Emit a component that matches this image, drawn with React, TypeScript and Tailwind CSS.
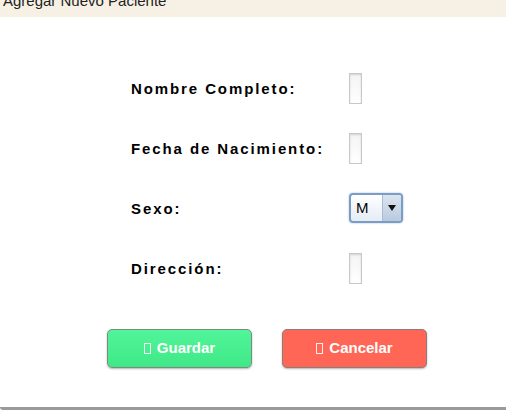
import React from 'react';

const Tofu: React.FC = () => (
  <span className="inline-block w-[7px] h-[11px] border border-white/90 mr-[6px] align-[-1px]" />
);

const TallInput: React.FC = () => (
  <div className="w-[13px] h-[31px] border border-[#c8c8c8] bg-gradient-to-b from-[#f4f4f4] to-white shadow-[inset_0_1px_2px_rgba(0,0,0,0.15)]" />
);

const SexSelect: React.FC = () => (
  <div className="flex w-[54px] h-[30px] rounded-[4px] border-2 border-[#7b9cc4] bg-gradient-to-b from-white to-[#e4ecf5] overflow-hidden shadow-[0_0_2px_rgba(90,130,180,0.6)]">
    <div className="flex-1 flex items-center pl-[5px] text-[15px] text-black">M</div>
    <div className="w-[19px] flex items-center justify-center border-l border-[#a8bcd4] bg-gradient-to-b from-[#dbe5f0] to-[#b9cadf]">
      <svg width="8" height="6" viewBox="0 0 8 6">
        <path d="M0 0 H8 L4 6 Z" fill="#111" />
      </svg>
    </div>
  </div>
);

const App: React.FC = () => {
  const rows: { label: string; field: React.ReactNode }[] = [
    { label: 'Nombre Completo:', field: <TallInput /> },
    { label: 'Fecha de Nacimiento:', field: <TallInput /> },
    { label: 'Sexo:', field: <SexSelect /> },
    { label: 'Dirección:', field: <TallInput /> },
  ];

  return (
    <div className="w-[506px] h-[410px] bg-white overflow-hidden flex flex-col font-['Liberation_Sans',Arial,sans-serif]">
      {/* Title bar */}
      <div className="h-[17px] shrink-0 bg-[#f7f1e5] overflow-hidden">
        <div className="pl-[3px] -mt-[8px] text-[15px] leading-[17px] text-[#222]">Agregar Nuevo Paciente</div>
      </div>

      {/* Dialog body */}
      <div className="flex-1 flex flex-col border-b-[3px] border-[#9a9a9a] rounded-bl-[3px]">
        <div className="pt-[56px] pl-[131px] flex flex-col gap-[30px]">
          {rows.map((r) => (
            <div key={r.label} className="flex items-center h-[30px]">
              <div className="w-[218px] pt-[3px] text-[15px] font-bold tracking-[1.9px] text-black">{r.label}</div>
              {r.field}
            </div>
          ))}
        </div>

        <div className="mt-[46px] flex pl-[107px] gap-[30px]">
          <button className="w-[145px] h-[39px] rounded-[5px] border border-[#7d8a82] bg-gradient-to-b from-[#52f59a] to-[#3fe886] text-white text-[15px] font-bold shadow-[0_1px_2px_rgba(0,0,0,0.3)]">
            <Tofu />
            Guardar
          </button>
          <button className="w-[145px] h-[39px] rounded-[5px] border border-[#8a7d7a] bg-[#ff6655] text-white text-[15px] font-bold shadow-[0_1px_2px_rgba(0,0,0,0.3)]">
            <Tofu />
            Cancelar
          </button>
        </div>
      </div>
    </div>
  );
};

export default App;
